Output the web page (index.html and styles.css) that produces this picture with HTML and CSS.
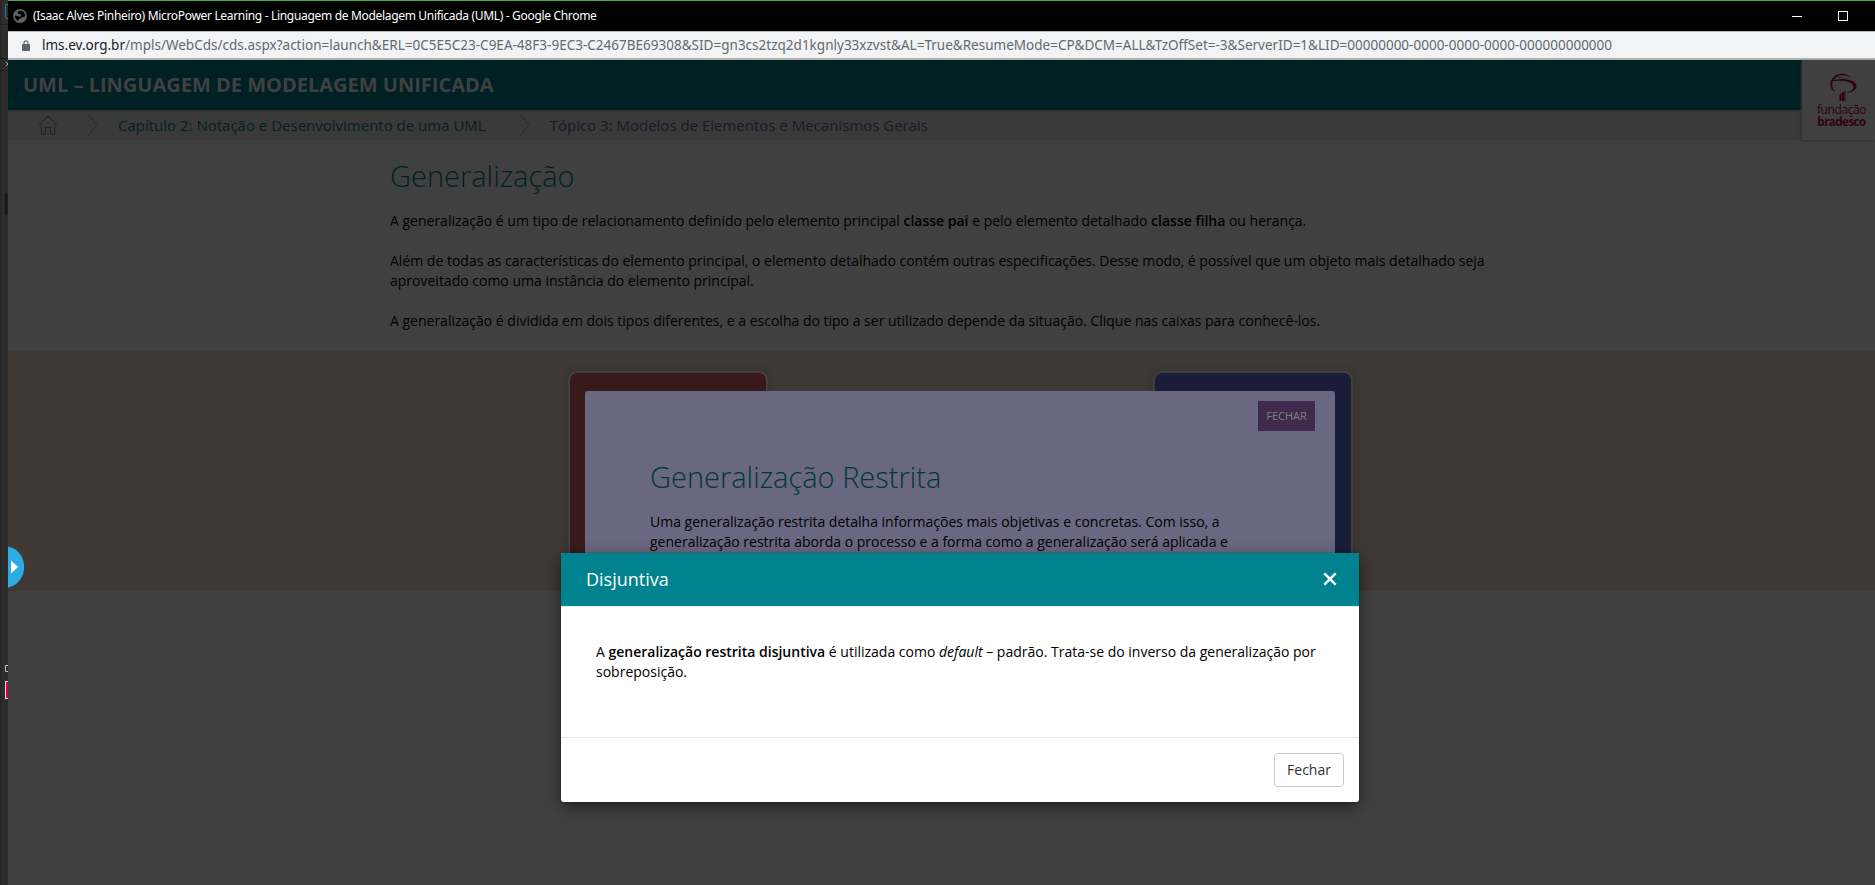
FILE: index.html
```html
<!DOCTYPE html>
<html lang="pt-BR">
<head>
<meta charset="utf-8">
<title>MicroPower Learning - Linguagem de Modelagem Unificada (UML)</title>
<link rel="stylesheet" href="styles.css">
</head>
<body>
<div class="desktop">
  <aside class="behind">
    <svg width="8" height="885" viewBox="0 0 8 885">
      <path d="M0 24.5H8M0 58.5H8M0 70.5H8" stroke="#1c1c1c"/>
      <path d="M1 0V885" stroke="#202020" stroke-width="1"/>
      <path d="M9 4.5H7Q5.500 4.500 5.500 6.500V16.500Q5.500 18.500 7 18.500H9" fill="none" stroke="#2a7ea2"/>
      <path d="M6 62l2 2-2 2" fill="none" stroke="#aaa"/>
      <path d="M8 192H5l-1 2v20l1 2h3z" fill="#181818" stroke="#3c3c3c" stroke-width=".6"/>
      <path d="M9 665.500H5.500V671.500H9" fill="none" stroke="#bdbdbd"/>
      <rect x="5.500" y="681.500" width="5" height="17" fill="#d4005a" stroke="#ddd"/>
    </svg>
  </aside>
  <div class="window">
    <div class="titlebar">
      <svg class="globe" width="14" height="14" viewBox="0 0 14 14"><circle cx="7" cy="7" r="6.900" fill="#5f6368"/><path d="M7.500 1.800C5 2 4.200 3.200 5 4.500s2.800.4 3.200 1.600-1 1.800-2.600 1.500L2 6.500C1.700 9 3 11 5.200 12c.2-1.200.6-1.800 1.800-2.200s1.500-1.600 2.700-1.700 1.600-.8 2.500-.6C12.500 4.500 10.500 2 7.500 1.800z" fill="#000"/></svg>
      <span class="wintitle">(Isaac Alves Pinheiro) MicroPower Learning - Linguagem de Modelagem Unificada (UML) - Google Chrome</span>
      <svg class="controls" width="56" height="10" viewBox="0 0 56 10"><path d="M0 5.500H10" stroke="#fff"/><rect x="46.500" y=".5" width="9" height="9" fill="none" stroke="#fff"/></svg>
    </div>
    <div class="addressbar">
      <svg class="lock" width="8" height="11" viewBox="0 0 8 11"><rect y="4" width="8" height="7" rx="1" fill="#5f6368"/><path d="M2 4.500V2.800a2 2 0 0 1 4 0V4.500" fill="none" stroke="#5f6368" stroke-width="1.200"/></svg>
      <span class="url"><b>lms.ev.org.br</b>/mpls/WebCds/cds.aspx?action=launch&amp;ERL=0C5E5C23-C9EA-48F3-9EC3-C2467BE69308&amp;SID=gn3cs2tzq2d1kgnly33xzvst&amp;AL=True&amp;ResumeMode=CP&amp;DCM=ALL&amp;TzOffSet=-3&amp;ServerID=1&amp;LID=00000000-0000-0000-0000-000000000000</span>
    </div>
    <main class="page">
      <header class="top">
        <div class="bars">
          <h1 class="course">UML – LINGUAGEM DE MODELAGEM UNIFICADA</h1>
          <nav class="crumbs">
            <svg class="home" width="20" height="20" viewBox="0 0 20 20"><path d="M.8 10.500 10 1l9.200 9.500M3.200 8.500V19.300H7.600V12.400H12.400V19.300H16.800V8.500" fill="none" stroke="#202020"/></svg>
            <svg class="sep" width="10" height="22" viewBox="0 0 10 22"><path d="M.5.500 9 11 .5 21.500" fill="none" stroke="#2b2b2b"/></svg>
            <span class="chapter">Capítulo 2: Notação e Desenvolvimento de uma UML</span>
            <svg class="sep" width="10" height="22" viewBox="0 0 10 22"><path d="M.5.500 9 11 .5 21.500" fill="none" stroke="#2b2b2b"/></svg>
            <span class="topic">Tópico 3: Modelos de Elementos e Mecanismos Gerais</span>
          </nav>
        </div>
        <div class="brand">
          <svg width="32" height="28" viewBox="0 0 32 28"><g fill="#30000f"><path d="M26 5.500C21 .8 10 .5 6.800 8.500 5.500 13 6.500 16 10 19 4.500 17 3.500 12 5 8 8.500-.8 21-1.500 26 5.500z"/><path d="M2.500 8.800C12 4.500 29 5 30.500 13 30.800 17 26 20 19.500 19.800 24 19 28 17 27.500 13.500 26.500 7.500 13 6.500 2.500 8.800z"/><path d="M8 6C13 3.200 18 3.500 22 5 17 4.300 12 4.500 8 6z"/><path d="M13.500 21l2-1v8h-2zM16 19.500l2-.8V28h-2zM18.500 18.200l1-.5V28h-1z"/></g></svg>
          <span class="brand1">fundação</span><span class="brand2">bradesco</span>
        </div>
      </header>
      <section class="intro">
        <h2 class="heading">Generalização</h2>
        <p>A generalização é um tipo de relacionamento definido pelo elemento principal <b>classe pai</b> e pelo elemento detalhado <b>classe filha</b> ou herança.</p>
        <p>Além de todas as características do elemento principal, o elemento detalhado contém outras especificações. Desse modo, é possível que um objeto mais detalhado seja<br>aproveitado como uma instância do elemento principal.</p>
        <p>A generalização é dividida em dois tipos diferentes, e a escolha do tipo a ser utilizado depende da situação. Clique nas caixas para conhecê-los.</p>
      </section>
      <section class="band">
        <div class="card red"></div>
        <div class="card blue"></div>
      </section>
      <div class="panel">
        <button class="close-panel">FECHAR</button>
        <h2 class="heading">Generalização Restrita</h2>
        <p>Uma generalização restrita detalha informações mais objetivas e concretas. Com isso, a<br>generalização restrita aborda o processo e a forma como a generalização será aplicada e</p>
      </div>
      <div class="drawer"><svg width="17" height="42" viewBox="0 0 17 42"><path d="M0 .5C21.500 5 21.500 37 0 41.500z" fill="#2dace4"/><path d="M3 14.500 10 21 3 27.500z" fill="#fff"/></svg></div>
      <div class="modal">
        <div class="modal-head"><span>Disjuntiva</span><svg width="14" height="14" viewBox="0 0 14 14"><path d="M1.300 1.300 12.700 12.700M12.700 1.300 1.300 12.700" stroke="#fff" stroke-width="2.400"/></svg></div>
        <div class="modal-body">A <b>generalização restrita disjuntiva</b> é utilizada como <i>default</i> – padrão. Trata-se do inverso da generalização por<br>sobreposição.</div>
        <div class="modal-foot"><button class="btn">Fechar</button></div>
      </div>
    </main>
  </div>
</div>
</body>
</html>
```
FILE: styles.css
```css
* { box-sizing: border-box; }
body { margin: 0; font-family: "Open Sans", sans-serif; font-size: 14px; line-height: 20px; color: #000; }
h1, h2, p { margin: 0; }
b { font-weight: 600; }
svg { display: block; flex: none; }
button { font-family: inherit; padding: 0; }
.desktop { display: flex; width: 1875px; height: 885px; overflow: hidden; }
.behind { width: 8px; background: #2e2e2e; }
.window { flex: 1; position: relative; display: flex; flex-direction: column; white-space: nowrap; }
.titlebar { height: 31px; background: #000; border-top: 1px solid #48ad48; display: flex; align-items: center; padding: 0 27px 0 5px; }
.wintitle { font-family: "Noto Sans", sans-serif; font-size: 12px; letter-spacing: -0.32px; color: #fff; margin-left: 6px; }
.controls { margin-left: auto; }
.addressbar { height: 29px; background: #f1f3f4; border-top: 1px solid #b5b5b5; border-bottom: 2px solid #b0b0b0; display: flex; align-items: center; padding-left: 14px; }
.url { font-family: "Noto Sans", sans-serif; font-size: 13.52px; color: #66696d; margin-left: 12px; }
.url b { font-weight: 400; color: #202124; }
.page { flex: 1; background: #404040; }
.top { display: flex; height: 80px; }
.bars { flex: 1; }
.course { height: 50px; background: #002123; color: #404040; font-size: 20px; font-weight: 700; line-height: 50px; padding-left: 15px; }
.crumbs { height: 30px; background: #3a3a3a; display: flex; align-items: center; font-size: 15px; padding-left: 30px; box-shadow: inset 0 3px 2px -2px #2e2e2e; }
.sep { margin-left: 30px; }
.chapter { color: #002123; margin-left: 20px; }
.chapter + .sep { margin-left: 34px; }
.topic { color: #20162a; margin-left: 20px; }
.brand { position: relative; width: 73px; height: 80px; background: #404040; display: flex; flex-direction: column; align-items: center; padding: 13px 0 0 6px; color: #30000f; font-size: 12px; line-height: 12px; box-shadow: -1px 1px 2px #303030; }
.brand1 { margin-top: 3px; letter-spacing: -0.4px; }
.brand2 { font-weight: 700; font-size: 11.5px; letter-spacing: -0.5px; }
.intro { height: 211px; padding: 16px 0 0 382px; }
.heading { font-size: 29px; font-weight: 300; line-height: 40px; color: #002123; }
.intro p { margin-bottom: 20px; }
.intro .heading { margin-bottom: 15px; }
.band { height: 240px; background: #3f3936; display: flex; padding: 20px 522px 0 560px; justify-content: space-between; }
.card { width: 200px; height: 200px; border: 2px solid #404040; border-radius: 9px; box-shadow: 0 0 8px rgba(0,0,0,.2); }
.red { background: #381a1b; }
.blue { background: #191d39; }
.panel { position: absolute; left: 577px; top: 391px; width: 750px; height: 200px; background: #696880; border-radius: 3px; padding: 66px 65px 0; }
.panel .heading { color: #00373c; margin-bottom: 15px; }
.close-panel { position: absolute; right: 20px; top: 10px; width: 57px; height: 30px; border: 0; background: #3d2a4d; color: #808080; font-size: 11px; padding-bottom: 1px; }
.drawer { position: absolute; left: 0; top: 546px; }
.modal { position: absolute; left: 553px; top: 553px; width: 798px; height: 249px; background: #fff; border-radius: 3px; box-shadow: 0 5px 15px rgba(0,0,0,.5), 0 0 1px rgba(0,0,0,.5); overflow: hidden; }
.modal-head { height: 54px; background: #00838f; color: #fff; display: flex; align-items: center; justify-content: space-between; padding: 0 22px 1px 25px; font-size: 18px; border-bottom: 1px solid #e0f0f1; }
.modal-body { height: 130px; padding: 35px 35px 0; }
.modal-foot { height: 65px; border-top: 1px solid #e5e5e5; padding: 15px 15px 0; display: flex; justify-content: flex-end; }
.btn { width: 70px; height: 34px; border: 1px solid #ccc; border-radius: 4px; background: #fff; color: #333; font-size: 14px; padding-bottom: 1px; }
```
